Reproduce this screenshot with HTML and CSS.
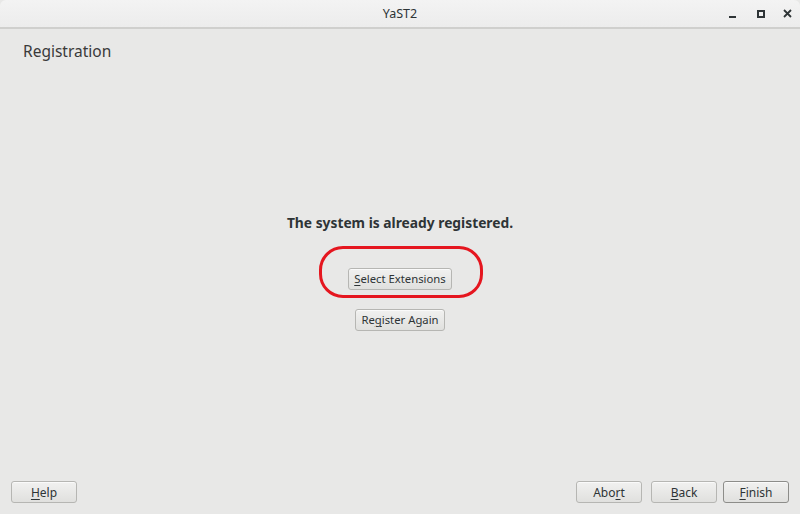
FILE: index.html
```html
<!DOCTYPE html>
<html>
<head>
	<title>YaST2</title>
	<link rel="stylesheet" href="styles.css">
</head>
<body>
	<div class="window">
		<div class="titlebar">
			<span class="title">YaST2</span>
			<div class="controls">
				<span class="ctl min"></span>
				<span class="ctl max"></span>
				<span class="ctl close">
					<svg width="9" height="9" viewBox="0 0 9 9"><path d="M1 1 L8 8 M8 1 L1 8" stroke="#2e3436" stroke-width="1.8"/></svg>
				</span>
			</div>
		</div>

		<div class="content">
			<div class="heading">Registration</div>

			<div class="main">
				<p class="status">The system is already registered.</p>
				<div class="marked">
					<button class="btn"><u>S</u>elect Extensions</button>
					<div class="circle"></div>
				</div>
				<button class="btn">Re<u>g</u>ister Again</button>
			</div>

			<div class="footer">
				<button class="btn wide"><u>H</u>elp</button>
				<div class="right">
					<button class="btn wide">Abo<u>r</u>t</button>
					<button class="btn wide back"><u>B</u>ack</button>
					<button class="btn wide default"><u>F</u>inish</button>
				</div>
			</div>
		</div>
	</div>
</body>
</html>
```

FILE: styles.css
```css
html, body {
	margin: 0;
	padding: 0;
	font-family: "Noto Sans", "Open Sans", sans-serif;
	color: #2e3436;
	background: #e8e8e7;
}
.window {
	width: 800px;
	height: 514px;
	display: flex;
	flex-direction: column;
}
.titlebar {
	height: 27px;
	background: linear-gradient(#f3f3f3, #ececec);
	border-bottom: 2px solid #cfcfcd;
	display: flex;
	align-items: center;
	justify-content: center;
	position: relative;
	border-radius: 6px 6px 0 0;
}
.title {
	font-size: 12.5px;
	color: #2e3436;
}
.controls {
	position: absolute;
	right: 8px;
	top: 0;
	height: 27px;
	display: flex;
	align-items: center;
	gap: 18px;
}
.ctl {
	width: 9px;
	height: 9px;
	display: block;
	position: relative;
}
.min::after {
	content: "";
	position: absolute;
	left: 0;
	bottom: 0;
	width: 7px;
	height: 2px;
	background: #2e3436;
}
.max::after {
	content: "";
	position: absolute;
	left: 1px;
	top: 1px;
	width: 4px;
	height: 4px;
	border: 2px solid #2e3436;
}
.close svg {
	display: block;
}
.content {
	flex: 1;
	display: flex;
	flex-direction: column;
	background: #e8e8e7;
}
.heading {
	font-size: 15.5px;
	padding: 11px 23px 0;
	height: 28px;
	color: #3a3a3a;
}
.main {
	flex: 1;
	display: flex;
	flex-direction: column;
	align-items: center;
	padding-top: 146px;
}
.status {
	margin: 0 0 34px;
	font-size: 13.8px;
	font-weight: bold;
	line-height: 18px;
	color: #2e3436;
}
.marked {
	position: relative;
	margin-bottom: 19px;
}
.circle {
	position: absolute;
	left: -29px;
	top: -20px;
	width: 158px;
	height: 46px;
	border: 3px solid #e5161f;
	border-radius: 24px;
}
.btn {
	font-family: "Noto Sans", "Open Sans", sans-serif;
	font-size: 11.3px;
	color: #2e3436;
	height: 22px;
	padding: 0 5px;
	border: 1px solid #b6b6b3;
	border-radius: 3px;
	background: linear-gradient(#f1f1f0, #e0e0de);
	box-shadow: inset 0 1px #fafafa;
}
.btn u {
	text-decoration-thickness: 1px;
	text-underline-offset: 2px;
}
.footer {
	display: flex;
	justify-content: space-between;
	padding: 0 11px 11px;
}
.right {
	display: flex;
}
.back {
	margin-left: 9px;
}
.default {
	margin-left: 6px;
	border-color: #8d8d8a;
}
.wide {
	width: 66px;
	font-size: 12px;
}
```
